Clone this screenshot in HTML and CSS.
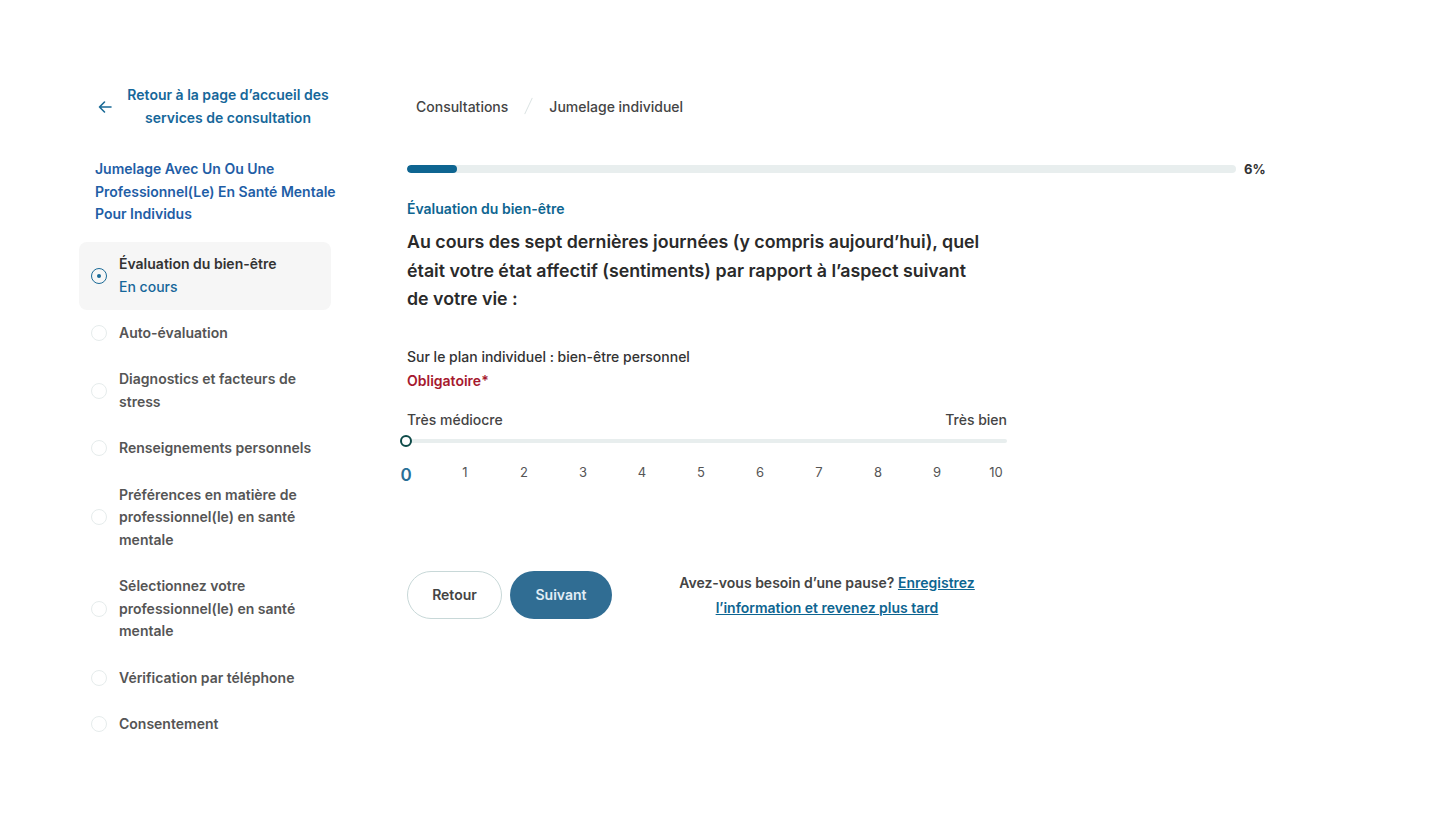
FILE: index.html
```html
<!DOCTYPE html>
<html lang="fr">
<head>
<meta charset="utf-8">
<title>Jumelage individuel</title>
<link rel="stylesheet" href="styles.css">
</head>
<body>
<div class="page">
  <aside class="sidebar">
    <a class="back" href="#">
      <svg class="back-icon" width="16" height="16" viewBox="0 0 16 16" aria-hidden="true"><path d="M14 8H2.5M7.5 3L2.5 8l5 5" fill="none" stroke="#1a6a96" stroke-width="1.6" stroke-linecap="round" stroke-linejoin="round"/></svg>
      <span>Retour à la page d’accueil des services de consultation</span>
    </a>
    <h2 class="flow-title">Jumelage Avec Un Ou Une Professionnel(Le) En Santé Mentale Pour Individus</h2>
    <ol class="steps">
      <li class="step active"><span class="dot"></span><div><div class="step-name">Évaluation du bien-être</div><div class="step-status">En cours</div></div></li>
      <li class="step"><span class="dot"></span><div class="step-name">Auto-évaluation</div></li>
      <li class="step"><span class="dot"></span><div class="step-name">Diagnostics et facteurs de stress</div></li>
      <li class="step"><span class="dot"></span><div class="step-name">Renseignements personnels</div></li>
      <li class="step"><span class="dot"></span><div class="step-name">Préférences en matière de professionnel(le) en santé mentale</div></li>
      <li class="step"><span class="dot"></span><div class="step-name">Sélectionnez votre professionnel(le) en santé mentale</div></li>
      <li class="step"><span class="dot"></span><div class="step-name">Vérification par téléphone</div></li>
      <li class="step"><span class="dot"></span><div class="step-name">Consentement</div></li>
    </ol>
  </aside>
  <main class="main">
    <nav class="crumbs"><span>Consultations</span><span class="sep"></span><span>Jumelage individuel</span></nav>
    <div class="progress-row">
      <div class="track"><div class="fill" style="width:6%"></div></div>
      <span class="pct">6%</span>
    </div>
    <div class="form">
      <div class="section">Évaluation du bien-être</div>
      <h1 class="question">Au cours des sept dernières journées (y compris aujourd’hui), quel était votre état affectif (sentiments) par rapport à l’aspect suivant de votre vie :</h1>
      <div class="field-label">Sur le plan individuel : bien-être personnel</div>
      <div class="required">Obligatoire*</div>
      <div class="scale-labels"><span>Très médiocre</span><span>Très bien</span></div>
      <div class="slider"><span class="thumb"></span></div>
      <div class="ticks">
        <span class="tick current">0</span><span class="tick">1</span><span class="tick">2</span><span class="tick">3</span><span class="tick">4</span><span class="tick">5</span><span class="tick">6</span><span class="tick">7</span><span class="tick">8</span><span class="tick">9</span><span class="tick">10</span>
      </div>
    </div>
    <div class="actions">
      <button class="btn btn-outline">Retour</button>
      <button class="btn btn-primary">Suivant</button>
      <p class="pause">Avez-vous besoin d’une pause? <a href="#">Enregistrez l’information et revenez plus tard</a></p>
    </div>
  </main>
</div>
</body>
</html>
```

FILE: styles.css
```css
* { box-sizing: border-box; }
html, body { margin: 0; padding: 0; background: #fff; }
body {
  font-family: "Inter", "Noto Sans", sans-serif;
  color: #333;
  -webkit-font-smoothing: antialiased;
}
.page {
  display: flex;
  padding: 84px 0 0 79px;
  width: 1436px;
  min-height: 836px;
}
.sidebar {
  width: 252px;
  flex: none;
}
.back {
  display: flex;
  align-items: center;
  gap: 12px;
  padding-left: 18px;
  color: #16679a;
  text-decoration: none;
  font-size: 14px;
  font-weight: 600;
  line-height: 22.5px;
}
.back span { text-align: center; width: 216px; }
.back-icon { flex: none; }
.flow-title {
  margin: 29px -12px 16px 16px;
  font-size: 14px;
  font-weight: 600;
  line-height: 22.5px;
  color: #1f5ea6;
}
.steps { list-style: none; margin: 0; padding: 0; }
.step {
  display: flex;
  align-items: center;
  gap: 12px;
  padding: 12px;
  border-radius: 8px;
  font-size: 14px;
  line-height: 22.5px;
  font-weight: 600;
  color: #555;
}
.step .step-name { width: 200px; }
.dot {
  flex: none;
  width: 16px; height: 16px;
  border-radius: 50%;
  border: 1px solid #e6ecec;
  position: relative;
}
.step.active { background: #f6f6f6; padding: 11.5px 12px; }
.step.active .step-name { color: #333; }
.step.active .dot { border: 1.5px solid #1a6a96; }
.step.active .dot::after {
  content: ""; position: absolute;
  left: 50%; top: 50%;
  width: 4px; height: 4px; margin: -2px 0 0 -2px;
  border-radius: 50%; background: #1a6a96;
}
.step-status { color: #16679a; font-weight: 500; }

.main {
  margin-left: 76px;
  width: 860px;
}
.crumbs {
  display: flex;
  align-items: center;
  padding-left: 9px;
  height: 44px;
  font-size: 14px;
  font-weight: 500;
  color: #444;
}
.sep {
  width: 1px; height: 18px;
  margin: 0 20px;
  background: #dbe3e3;
  transform: rotate(25deg);
}
.progress-row {
  display: flex;
  align-items: center;
  gap: 8px;
  margin-top: 33px;
}
.track {
  width: 829px;
  height: 8px;
  border-radius: 4px;
  background: #e8eeee;
  overflow: hidden;
}
.fill { height: 100%; background: #0e6591; border-radius: 4px; }
.pct { font-size: 13px; font-weight: 700; color: #333; }

.form { width: 600px; }
.section {
  margin-top: 22px;
  font-size: 14px;
  font-weight: 600;
  color: #0e6591;
  line-height: 20px;
}
.question {
  margin: 9px 0 0;
  max-width: 585px;
  font-size: 17.8px;
  font-weight: 600;
  line-height: 28.5px;
  color: #2a2a2a;
}
.field-label {
  margin-top: 31px;
  font-size: 14px;
  font-weight: 500;
  line-height: 24px;
  color: #333;
}
.required {
  font-size: 14px;
  font-weight: 600;
  line-height: 24px;
  color: #a6192e;
}
.scale-labels {
  display: flex;
  justify-content: space-between;
  margin-top: 17px;
  font-size: 14px;
  font-weight: 500;
  color: #444;
  line-height: 20px;
}
.slider {
  position: relative;
  margin: 9px 0 0 -3px;
  width: 603px;
  height: 4px;
  border-radius: 2px;
  background: #e8eeee;
}
.thumb {
  position: absolute;
  left: -4px; top: -4px;
  width: 12px; height: 12px;
  border-radius: 50%;
  border: 2px solid #0d4a48;
  background: #fff;
}
.ticks {
  display: flex;
  justify-content: space-between;
  margin: 20px 0 0 -8px;
  width: 604px;
  font-size: 13px;
  color: #555;
  line-height: 18px;
}
.tick { width: 14px; text-align: center; }
.tick.current { font-size: 17px; font-weight: 600; color: #2a6f97; margin-top: 3px; }

.actions {
  display: flex;
  align-items: center;
  margin-top: 86px;
}
.btn {
  height: 48px;
  border-radius: 24px;
  font-family: inherit;
  font-size: 14px;
  font-weight: 600;
  cursor: pointer;
}
.btn-outline {
  width: 95px;
  background: #fff;
  border: 1px solid #c8d8d8;
  color: #444;
}
.btn-primary {
  width: 102px;
  margin-left: 8px;
  background: #306d93;
  border: none;
  color: #e1eef6;
}
.pause {
  margin: 0 0 0 60px;
  width: 310px;
  text-align: center;
  font-size: 14px;
  font-weight: 600;
  line-height: 25px;
  color: #444;
}
.pause a { color: #0e6591; text-decoration: underline; }
```
